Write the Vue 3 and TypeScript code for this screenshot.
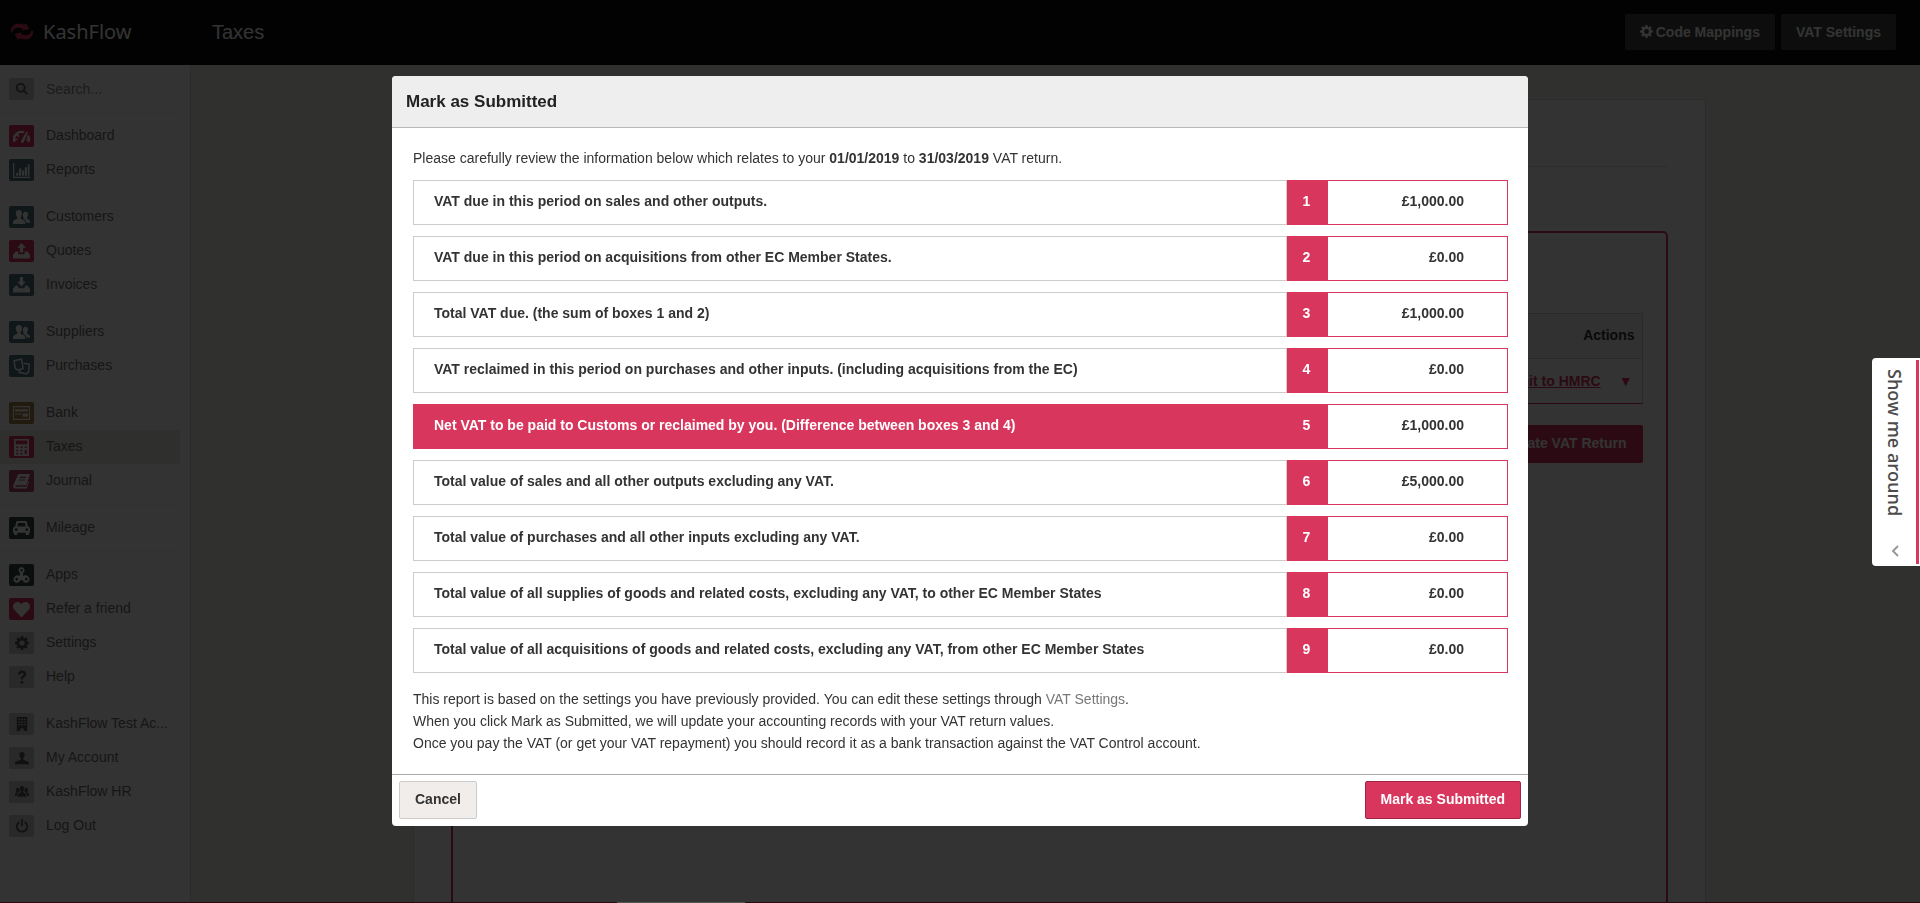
<script setup lang="ts">
import { ref } from 'vue'

interface NavItem {
  label: string
  icon: string
  tone: string
}

interface ReturnBox {
  box: number
  label: string
  amount: string
}

const query = ref('')
const current = 'Taxes'

const groups: NavItem[][] = [
  [
    { label: 'Dashboard', icon: 'gauge', tone: 'red' },
    { label: 'Reports', icon: 'chart', tone: 'blue' },
  ],
  [
    { label: 'Customers', icon: 'people', tone: 'blue' },
    { label: 'Quotes', icon: 'upload', tone: 'red' },
    { label: 'Invoices', icon: 'download', tone: 'blue' },
  ],
  [
    { label: 'Suppliers', icon: 'people', tone: 'blue' },
    { label: 'Purchases', icon: 'notes', tone: 'blue' },
  ],
  [
    { label: 'Bank', icon: 'card', tone: 'amber' },
    { label: 'Taxes', icon: 'calculator', tone: 'red' },
    { label: 'Journal', icon: 'book', tone: 'plum' },
  ],
  [{ label: 'Mileage', icon: 'car', tone: 'dark' }],
  [
    { label: 'Apps', icon: 'apps', tone: 'dark' },
    { label: 'Refer a friend', icon: 'heart', tone: 'red' },
    { label: 'Settings', icon: 'gear', tone: 'grey' },
    { label: 'Help', icon: 'help', tone: 'grey' },
  ],
  [
    { label: 'KashFlow Test Ac...', icon: 'building', tone: 'grey' },
    { label: 'My Account', icon: 'person', tone: 'grey' },
    { label: 'KashFlow HR', icon: 'team', tone: 'grey' },
    { label: 'Log Out', icon: 'power', tone: 'grey' },
  ],
]

const boxes: ReturnBox[] = [
  { box: 1, label: 'VAT due in this period on sales and other outputs.', amount: '£1,000.00' },
  { box: 2, label: 'VAT due in this period on acquisitions from other EC Member States.', amount: '£0.00' },
  { box: 3, label: 'Total VAT due. (the sum of boxes 1 and 2)', amount: '£1,000.00' },
  { box: 4, label: 'VAT reclaimed in this period on purchases and other inputs. (including acquisitions from the EC)', amount: '£0.00' },
  { box: 5, label: 'Net VAT to be paid to Customs or reclaimed by you. (Difference between boxes 3 and 4)', amount: '£1,000.00' },
  { box: 6, label: 'Total value of sales and all other outputs excluding any VAT.', amount: '£5,000.00' },
  { box: 7, label: 'Total value of purchases and all other inputs excluding any VAT.', amount: '£0.00' },
  { box: 8, label: 'Total value of all supplies of goods and related costs, excluding any VAT, to other EC Member States', amount: '£0.00' },
  { box: 9, label: 'Total value of all acquisitions of goods and related costs, excluding any VAT, from other EC Member States', amount: '£0.00' },
]

const gear =
  'M6.8 0h2.4l.4 2.1 1.3.6L12.700 1.500l1.800 1.800-1.200 1.800.6 1.300L16 6.800v2.400l-2.100.4-.6 1.300 1.200 1.800-1.800 1.800-1.800-1.200-1.300.6L9.200 16H6.800l-.4-2.100-1.300-.6-1.800 1.200-1.800-1.800 1.200-1.800-.6-1.300L0 9.200V6.800l2.100-.4.6-1.300L1.500 3.300l1.800-1.800 1.800 1.200 1.300-.6zM8 5a3 3 0 1 0 0 6 3 3 0 0 0 0-6z'

// Glyphs share a 16x16 box and are filled with the tile's text colour.
const glyphs: Record<string, string> = {
  search: 'M6.500 1a5.500 5.500 0 1 0 3.200 10l3.600 3.700 1.500-1.500L11.100 9.600A5.500 5.500 0 0 0 6.500 1zm0 2a3.500 3.500 0 1 1 0 7 3.500 3.500 0 0 1 0-7z',
  gauge: 'M0 13a8.300 8.300 0 0 1 11-9.800L10 5A6 6 0 0 0 4.500 5.800L6 7.600 5 8.600 3.200 7A6 6 0 0 0 2.200 10H4v1.500H2.200L2.500 13zM12.800 3.300l1.200.7-4 9.500c-.6 1.100-3 .3-2.500-1.200zM14.300 6A8 8 0 0 1 16 13h-2.500l.3-1.500H12.500V10h1.200a6 6 0 0 0-.6-2z',
  chart: 'M0 1h1.200v12.800H16V15H0zM3 10h2v3H3zm2.700-4h2v7h-2zm2.800 2h2v5h-2zm2.700-3h2v8h-2zM14 2h1.500v11H14z',
  people: 'M5.500 1C7.500 1 8.600 2.500 8.400 4.500 8.300 6 7.600 7 7.200 7.700v1.500l3.300 1.500c.8.400 1 1.300 1 3.300H0c0-2 .1-2.900 1-3.300l3-1.500V7.700C3.300 7 2.700 6 2.600 4.500 2.400 2.500 3.500 1 5.500 1zM11.800 2.500c1.600 0 2.400 1.200 2.300 2.700 0 1.300-.6 2-1 2.600v1.300l2 1c.8.400.9 1.200.9 2.900h-3.500c0-1.700-.5-2.700-1.600-3.200l-1-.5V7.800c-.5-.7-.7-1.700-.5-2.700.2-1.600 1-2.600 2.400-2.600z',
  upload: 'M8 0l4 4.500H9.500V9h-3V4.500H4zM2.500 8H5v2.500h6V8h2.500L16 11v3.500H0V11z',
  download: 'M6.500 0h3v4.500H12L8 9 4 4.500h2.500zM2.500 8h1.800l1.200 2.500h5L11.700 8h1.800l2.500 3v3.500H0V11z',
  card: 'M0 1h16v13H0zm1 1v11h14V2zM2 4h12v2H2zm0 4h6v1H2zm7 0h5v3H9z',
  calculator: 'M1 0h14v16H1zm1.500 1.500V5h11V1.500zM3 7v1.500h2V7zm4 0v1.500h2V7zm4 0v1.500h2V7zm-8 3v1.500h2V10zm4 0v1.500h2V10zm4 0v4h2v-4zm-8 3v1.500h2V13zm4 0v1.500h2V13z',
  book: 'M5 1h11l-3.500 10.500H2.600c-.7 0-.8 1.500.1 1.500h10l1.600-5H15l-2 6.500H2c-1.500 0-2.200-1.700-1.600-3.200zM6.500 3.500L6.200 4.600h6L12.500 3.500zM5.700 6l-.3 1.100h6l.3-1.100z',
  car: 'M4.500 1h7c.8 0 1.400.5 1.600 1.200L14 6c1.200.3 2 1.100 2 2.300V12h-1v2h-3v-2H4v2H1v-2H0V8.300C0 7.100.8 6.300 2 6l.9-3.800C3.100 1.500 3.700 1 4.500 1zm.3 1.800L4 6h8l-.8-3.200zM3 7.700a1.300 1.300 0 1 0 0 2.600 1.300 1.300 0 0 0 0-2.600zm10 0a1.300 1.300 0 1 0 0 2.600 1.300 1.300 0 0 0 0-2.600z',
  apps: 'M8 0a3 3 0 0 1 1.500 5.500v3a3.500 3.500 0 0 1 5 .7 3.200 3.200 0 1 1-5.200 3.200H6.700a3.200 3.200 0 1 1-5.200-3.200 3.500 3.500 0 0 1 5-.7v-3A3 3 0 0 1 8 0zm0 1.800a1.200 1.200 0 1 0 0 2.400 1.200 1.200 0 0 0 0-2.400zM3.500 10.200a1.300 1.300 0 1 0 0 2.600 1.300 1.300 0 0 0 0-2.600zm9 0a1.300 1.300 0 1 0 0 2.600 1.300 1.300 0 0 0 0-2.600z',
  heart: 'M8 15.500L1.200 8.300C-.4 6.500-.3 3.500 1.300 2 3.200.2 6.400.6 8 3 9.600.6 12.800.2 14.700 2c1.600 1.500 1.700 4.500.1 6.300z',
  gear,
  help: 'M3.500 5C3.500 2 5.500.5 8.200.5 11 .5 12.800 2 12.800 4.500c0 3.200-3.600 3.300-3.600 6H6.500c0-3.600 3.400-3.800 3.400-5.700C9.900 3.700 9.200 3 8.100 3 7 3 6.300 3.700 6.200 5zM6.300 12.500H9.300v3h-3z',
  building: 'M2 0h12v16h-4v-3H6v3H2zm2 2v1.500h2V2zm3 0v1.500h2V2zm3 0v1.500h2V2zM4 5v1.500h2V5zm3 0v1.500h2V5zm3 0v1.500h2V5zM4 8v1.500h2V8zm3 0v1.500h2V8zm3 0v1.500h2V8z',
  person: 'M8 1c2 0 3.200 1.500 3 3.700-.1 1.600-.8 2.700-1.500 3.400V10l5 2c.9.400 1.500 1.200 1.500 3H0c0-1.800.6-2.600 1.500-3l5-2V8.100C5.800 7.400 5.100 6.300 5 4.700 4.800 2.500 6 1 8 1z',
  team: 'M8 1c1.800 0 2.700 1.200 2.500 3-.1 1.500-.6 2.300-1.200 3v1.300l2.200 1c1 .5 1.300 1.300 1.300 4.200H3.200c0-2.900.3-3.700 1.300-4.200l2.200-1V7c-.6-.7-1.100-1.500-1.200-3C5.300 2.200 6.200 1 8 1zM3 3c.8 0 1.400.3 1.700 1 0 1.700.4 2.700 1 3.500-1.900.9-3.200 1.300-3.400 5H0c0-2 .1-3 .9-3.400L2 8.500C1 7 .8 3 3 3zm10 0c2.200 0 2 4 1 5.500l1.100.6c.8.400.9 1.400.9 3.400h-2.300c-.2-3.700-1.500-4.100-3.400-5 .6-.8 1-1.800 1-3.500.3-.7.900-1 1.700-1z',
  power: 'M7 0h2v8H7zM4.500 2.500l1 1.700a5 5 0 1 0 5 0l1-1.700a7 7 0 1 1-7 0z',
}
</script>

<template>
  <div class="page">
    <header class="topbar">
      <a class="brand" href="#">
        <svg class="brand-mark" viewBox="0 0 22 17" aria-hidden="true">
          <path d="M0 9C-.5 3 4 0 9 .8L13.500 1.800 15 0l3.500 6-7.500 1.500 1-2C8 4 2.500 4 1.500 9.500zM22 8c.5 6-4 9-9 8.200L8.500 15.200 7 17l-3.500-6L11 9.500l-1 2c4 1.500 9.500 1.500 10.500-4z" />
        </svg>
        <span>KashFlow</span>
      </a>
      <h1>Taxes</h1>
      <div class="top-actions">
        <button type="button">
          <svg viewBox="0 0 16 16" aria-hidden="true"><path :d="gear" fill-rule="evenodd" /></svg>
          Code Mappings
        </button>
        <button type="button">VAT Settings</button>
      </div>
    </header>

    <div class="columns">
      <nav class="sidebar" aria-label="Main">
        <div class="group">
          <label class="nav-row">
            <span class="tile grey">
              <svg viewBox="0 0 16 16" aria-hidden="true"><path :d="glyphs.search" fill-rule="evenodd" /></svg>
            </span>
            <input v-model="query" type="text" placeholder="Search..." aria-label="Search" />
          </label>
        </div>
        <div v-for="(group, g) in groups" :key="g" class="group">
          <a
            v-for="item in group"
            :key="item.label"
            href="#"
            class="nav-row"
            :class="{ current: item.label === current }"
          >
            <span class="tile" :class="item.tone">
              <svg viewBox="0 0 16 16" aria-hidden="true">
                <g v-if="item.icon === 'notes'" fill="none" stroke="currentColor" stroke-width="1.400">
                  <path d="M1 2.500l7-1.500 1.500 9-5.500 1.200-2-1.700z" />
                  <path d="M10 5l5.500 1-1 7.500-2 1.500-6.500-1.500.4-2.500" />
                </g>
                <path v-else :d="glyphs[item.icon]" fill-rule="evenodd" />
              </svg>
            </span>
            <span class="nav-label">{{ item.label }}</span>
          </a>
        </div>
      </nav>

      <main class="content">
        <section class="card">
          <div class="card-head"></div>
          <div class="panel">
            <table class="returns">
              <thead>
                <tr><th scope="col">Actions</th></tr>
              </thead>
              <tbody>
                <tr>
                  <td><a href="#">Submit to HMRC</a><span class="caret">▼</span></td>
                </tr>
              </tbody>
            </table>
            <button type="button" class="create">Create VAT Return</button>
          </div>
        </section>
      </main>
    </div>

    <div class="overlay">
      <section class="dialog" role="dialog" aria-modal="true" aria-labelledby="dialog-title">
        <h2 id="dialog-title">Mark as Submitted</h2>
        <div class="dialog-body">
          <p>
            Please carefully review the information below which relates to your
            <strong>01/01/2019</strong> to <strong>31/03/2019</strong> VAT return.
          </p>
          <table class="boxes">
            <tbody>
              <tr v-for="row in boxes" :key="row.box" :class="{ net: row.box === 5 }">
                <th scope="row">{{ row.label }}</th>
                <td class="number">{{ row.box }}</td>
                <td class="amount">{{ row.amount }}</td>
              </tr>
            </tbody>
          </table>
          <p class="notes">
            This report is based on the settings you have previously provided. You can edit these
            settings through <a href="#">VAT Settings</a>.<br />
            When you click Mark as Submitted, we will update your accounting records with your VAT
            return values.<br />
            Once you pay the VAT (or get your VAT repayment) you should record it as a bank
            transaction against the VAT Control account.
          </p>
        </div>
        <footer>
          <button type="button" class="cancel">Cancel</button>
          <button type="button" class="confirm">Mark as Submitted</button>
        </footer>
      </section>
    </div>

    <button type="button" class="tour">
      <span>Show me around</span>
      <svg viewBox="0 0 8 12" aria-hidden="true"><path d="M7 1L2 6l5 5" /></svg>
    </button>
    <div class="bottom-edge"><span></span></div>
  </div>
</template>

<style>
body {
  margin: 0;
  overflow: hidden;
}
</style>

<style scoped>
* {
  box-sizing: border-box;
}

.page {
  height: 100vh;
  overflow: hidden;
  display: flex;
  flex-direction: column;
  background: #f0f0e9;
  color: #333;
  font-family: 'Liberation Sans', Arial, sans-serif;
  font-size: 14px;
  line-height: 22px;
}

button,
input {
  font: inherit;
}

svg {
  display: block;
  fill: currentColor;
}

h1,
h2,
p {
  margin: 0;
}

.topbar {
  flex: none;
  height: 65px;
  display: flex;
  align-items: center;
  padding: 0 24px 2px 11px;
  background: #0c0c0c;
  color: #fff;
}

.brand {
  width: 201px;
  display: flex;
  align-items: center;
  gap: 10px;
  color: #fff;
  text-decoration: none;
  font-family: 'Noto Sans', sans-serif;
  font-size: 20px;
}

.brand-mark {
  width: 22px;
  height: 17px;
  color: #d9365e;
}

h1 {
  font-size: 20px;
  font-weight: 400;
}

.top-actions {
  margin-left: auto;
  display: flex;
  gap: 6px;
}

.top-actions button {
  display: flex;
  align-items: center;
  gap: 3px;
  padding: 7px 15px;
  border: 0;
  border-radius: 2px;
  background: #3c443c;
  color: #fff;
  font-weight: 700;
}

.top-actions svg {
  width: 13px;
  height: 13px;
}

.columns {
  flex: 1;
  min-height: 0;
  display: flex;
}

.sidebar {
  flex: none;
  width: 191px;
  padding: 7px 10px 0 0;
  background: #fff;
  border-right: 1px solid #d4d4d4;
}

.group {
  padding-bottom: 6px;
  margin-bottom: 6px;
  border-bottom: 1px solid #f2f2f2;
}

.nav-row {
  height: 34px;
  display: flex;
  align-items: center;
  gap: 12px;
  padding-left: 9px;
  color: #6e6e6e;
  text-decoration: none;
  white-space: nowrap;
}

.nav-row.current {
  background: #e9e9e6;
}

.nav-row input {
  width: 120px;
  padding: 0;
  border: 0;
  background: none;
}

.nav-row input::placeholder {
  color: #8c8c8c;
  opacity: 1;
}

.nav-label {
  padding-bottom: 2px;
}

.tile {
  width: 25px;
  height: 22px;
  display: flex;
  align-items: center;
  justify-content: center;
  border-radius: 2px;
  color: #fff;
}

.tile svg {
  width: 17px;
  height: 17px;
}

.tile.red { background: #d9365e; }
.tile.blue { background: #50747f; }
.tile.amber { background: #a58446; }
.tile.plum { background: #b34868; }
.tile.dark { background: #334642; }
.tile.grey { background: #cbcbcb; color: #555; }
.tile.grey svg { width: 14px; height: 14px; }

.content {
  flex: 1;
  padding: 34px 33px 0 40px;
}

.card {
  max-width: 1293px;
  height: 900px;
  margin: 0 auto;
  padding: 0 37px;
  background: #fff;
  border: 1px solid #d4d4d4;
}

.card-head {
  height: 67px;
  border-bottom: 1px solid #e2e2e2;
}

.panel {
  height: 900px;
  margin-top: 64px;
  padding: 80px 23px 0;
  border: 2px solid #d9365e;
  border-radius: 5px;
  text-align: right;
}

.returns {
  width: 100%;
  border-collapse: collapse;
  border: 1px solid #ccc;
  border-bottom-color: #d9365e;
  font-weight: 700;
}

.returns th {
  height: 45px;
  padding: 0 7px 3px;
  background: #f4f4f4;
  border-bottom: 1px solid #ccc;
  text-align: right;
}

.returns td {
  height: 45px;
  padding: 0 9px 1px 0;
}

.returns a,
.caret {
  color: #d9365e;
}

.caret {
  display: inline-block;
  margin-left: 18px;
  font-size: 14px;
}

.create {
  margin-top: 21px;
  padding: 7px 16px 9px;
  border: 0;
  border-radius: 2px;
  background: #d9365e;
  color: #fff;
  font-weight: 700;
}

.overlay {
  position: fixed;
  inset: 0;
  padding: 76px 24px 0;
  background: rgba(0, 0, 0, 0.8);
}

.dialog {
  max-width: 1136px;
  margin: 0 auto;
  background: #fff;
  border-radius: 4px;
  overflow: hidden;
}

h2 {
  padding: 15px 14px 14px;
  background: #eee;
  border-bottom: 1px solid #b9b9b9;
  color: #222;
  font-size: 17px;
  line-height: 22px;
}

.dialog-body {
  padding: 19px 20px 20px 21px;
}

.dialog-body a {
  color: #777;
  text-decoration: none;
}

.notes {
  padding-top: 4px;
}

.boxes {
  width: 100%;
  border-collapse: separate;
  border-spacing: 0 11px;
  font-weight: 700;
}

.boxes th,
.boxes td {
  height: 45px;
  padding: 0 20px 4px;
  border: 1px solid #ccc;
  text-align: left;
}

.boxes .number {
  width: 41px;
  padding: 0 2px 4px 0;
  background: #d9365e;
  border-color: #d9365e;
  color: #fff;
  text-align: center;
}

.boxes .amount {
  width: 180px;
  padding-right: 43px;
  border-color: #d9365e;
  border-left: 0;
  text-align: right;
}

.boxes .net th {
  background: #d9365e;
  border-color: #d9365e;
  color: #fff;
}

footer {
  display: flex;
  justify-content: space-between;
  padding: 6px 7px 7px;
  border-top: 1px solid #aaa;
}

footer button {
  padding: 6px 15px 8px;
  border: 1px solid #ccc;
  border-radius: 2px;
  background: #f0edeb;
  color: #333;
  font-weight: 700;
}

footer .confirm {
  background: #d9365e;
  border-color: #a02246;
  color: #fff;
}

.tour {
  position: fixed;
  top: 358px;
  right: 0;
  width: 48px;
  display: flex;
  flex-direction: column;
  align-items: center;
  gap: 29px;
  padding: 11px 2px 9px 0;
  border: 0;
  border-radius: 4px 0 0 4px;
  background: #fff;
  color: #4c4c4c;
  font-family: 'Open Sans', sans-serif;
  font-size: 18px;
  font-weight: 600;
  line-height: 26px;
}

.tour::after {
  content: '';
  position: absolute;
  inset: 2px 1px 2px auto;
  width: 3px;
  background: #d9365e;
}

.tour span {
  writing-mode: vertical-rl;
}

.tour svg {
  width: 8px;
  height: 12px;
  fill: none;
  stroke: #999;
  stroke-width: 2;
}

.bottom-edge {
  position: fixed;
  inset: auto 0 0;
  height: 1px;
  display: flex;
  background: #2b0b13;
}

.bottom-edge span {
  width: 128px;
  margin-left: 617px;
  background: #555;
}
</style>
